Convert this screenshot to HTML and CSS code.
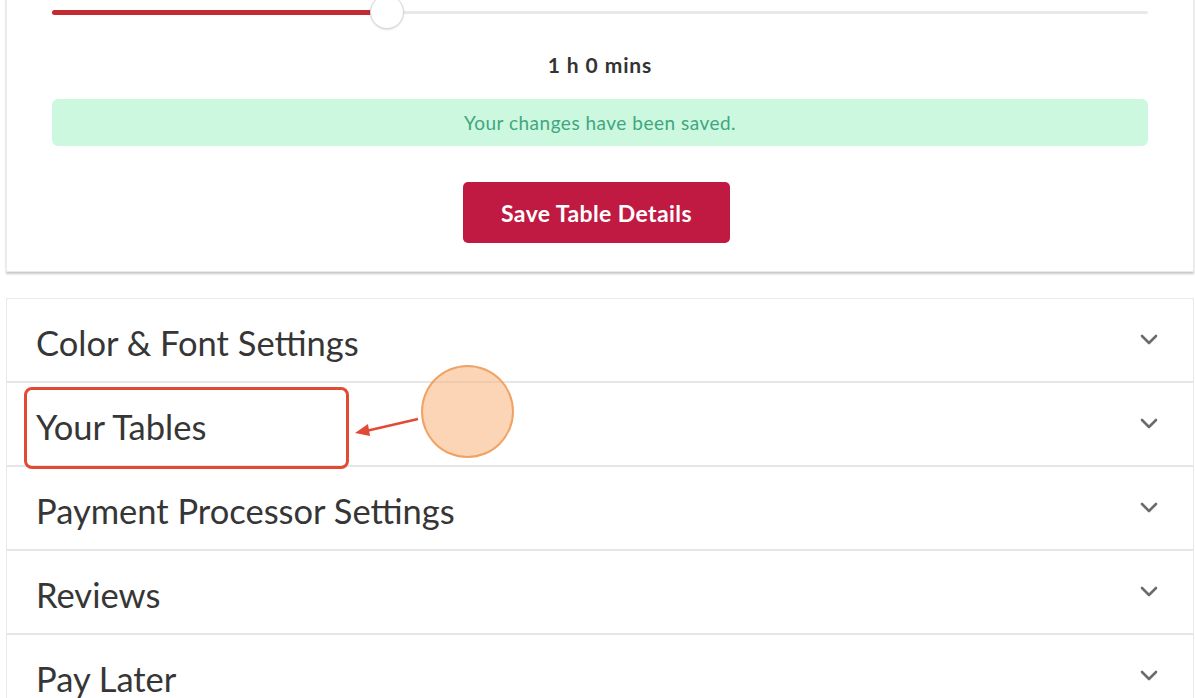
FILE: index.html
```html
<!DOCTYPE html>
<html>
<head>
<meta charset="utf-8">
<link rel="stylesheet" href="styles.css">
</head>
<body>
<div class="page">
  <section class="card details">
    <div class="slider">
      <div class="track"></div>
      <div class="fill" style="width: 335px"></div>
      <div class="thumb" style="left: 318px"></div>
    </div>
    <div class="duration">1 h 0 mins</div>
    <div class="alert">Your changes have been saved.</div>
    <div class="actions">
      <button class="btn-save">Save Table Details</button>
    </div>
  </section>

  <section class="card accordion">
    <div class="acc-row">
      <span class="acc-title">Color &amp; Font Settings</span>
      <svg class="chev" viewBox="0 0 18 12" width="18" height="12"><path d="M2 2 L9 9 L16 2" fill="none" stroke="#6b6b6b" stroke-width="2.6" stroke-linecap="round" stroke-linejoin="round"/></svg>
    </div>
    <div class="acc-row">
      <span class="acc-title">Your Tables</span>
      <svg class="chev" viewBox="0 0 18 12" width="18" height="12"><path d="M2 2 L9 9 L16 2" fill="none" stroke="#6b6b6b" stroke-width="2.6" stroke-linecap="round" stroke-linejoin="round"/></svg>
    </div>
    <div class="acc-row">
      <span class="acc-title">Payment Processor Settings</span>
      <svg class="chev" viewBox="0 0 18 12" width="18" height="12"><path d="M2 2 L9 9 L16 2" fill="none" stroke="#6b6b6b" stroke-width="2.6" stroke-linecap="round" stroke-linejoin="round"/></svg>
    </div>
    <div class="acc-row">
      <span class="acc-title">Reviews</span>
      <svg class="chev" viewBox="0 0 18 12" width="18" height="12"><path d="M2 2 L9 9 L16 2" fill="none" stroke="#6b6b6b" stroke-width="2.6" stroke-linecap="round" stroke-linejoin="round"/></svg>
    </div>
    <div class="acc-row">
      <span class="acc-title">Pay Later</span>
      <svg class="chev" viewBox="0 0 18 12" width="18" height="12"><path d="M2 2 L9 9 L16 2" fill="none" stroke="#6b6b6b" stroke-width="2.6" stroke-linecap="round" stroke-linejoin="round"/></svg>
    </div>
  </section>

  <div class="highlight"></div>
  <svg class="arrow" width="70" height="24" viewBox="0 0 70 24">
    <path d="M66 3 L14 15" stroke="#e24a35" stroke-width="2.5" fill="none"/>
    <path d="M3 17 L16 8 L18 20 Z" fill="#e24a35"/>
  </svg>
  <div class="tap"></div>
</div>
</body>
</html>
```

FILE: styles.css
```css
* { box-sizing: border-box; }
html, body {
  margin: 0;
  padding: 0;
  background: #ffffff;
  overflow: hidden;
}
body {
  font-family: Lato, "Open Sans", "Liberation Sans", sans-serif;
  color: #3a3a3a;
}
.page {
  position: relative;
  width: 1195px;
  height: 698px;
  overflow: hidden;
}
.card {
  margin-left: 6px;
  width: 1188px;
  background: #fff;
  border: 1px solid #e9e9e9;
}
.details {
  margin-top: -6px;
  padding: 0 45px 28px;
  border-top: none;
  box-shadow: 0 2px 2px rgba(0, 0, 0, 0.22);
}
.slider {
  position: relative;
  height: 35px;
}
.track {
  position: absolute;
  left: 0;
  right: 0;
  top: 17px;
  height: 3px;
  background: #e9e9e9;
  border-radius: 2px;
}
.fill {
  position: absolute;
  left: 0;
  top: 16px;
  height: 5px;
  background: #c42a31;
  border-radius: 3px;
}
.thumb {
  position: absolute;
  top: 1px;
  width: 34px;
  height: 34px;
  border-radius: 50%;
  background: #fff;
  border: 1px solid #d6d6d6;
  box-shadow: 0 1px 2px rgba(0,0,0,0.12);
}
.duration {
  margin-top: 23px;
  text-align: center;
  font-size: 21px;
  line-height: 26px;
  font-weight: 700;
  letter-spacing: 0.9px;
  color: #333;
}
.alert {
  margin-top: 21px;
  height: 47px;
  background: #cbf8de;
  border-radius: 6px;
  color: #41a680;
  font-size: 19px;
  letter-spacing: 0.5px;
  display: flex;
  align-items: center;
  justify-content: center;
}
.actions {
  margin-top: 36px;
  display: flex;
  justify-content: center;
}
.btn-save {
  width: 267px;
  height: 61px;
  border: none;
  border-radius: 5px;
  background: #c11a42;
  color: #fff;
  font-family: Lato, "Open Sans", "Liberation Sans", sans-serif;
  font-weight: 700;
  font-size: 23px;
  letter-spacing: 0.4px;
  margin-left: -7px;
}
.accordion {
  margin-top: 26px;
  border-bottom: none;
}
.acc-row {
  height: 84px;
  padding: 0 35px 0 29px;
  display: flex;
  align-items: center;
  justify-content: space-between;
  border-bottom: 2px solid #e6e6e6;
}
.acc-row:first-child { height: 84px; }
.acc-title {
  font-size: 34.5px;
  line-height: 40px;
  color: #363636;
  padding-top: 5px;
}
.chev { margin-top: 0; }
.highlight {
  position: absolute;
  left: 24px;
  top: 387px;
  width: 325px;
  height: 82px;
  border: 3px solid #e24a35;
  border-radius: 8px;
}
.arrow {
  position: absolute;
  left: 352px;
  top: 416px;
}
.tap {
  position: absolute;
  left: 421px;
  top: 365px;
  width: 93px;
  height: 93px;
  border-radius: 50%;
  background: rgba(248, 178, 120, 0.55);
  border: 2px solid rgba(238, 150, 80, 0.8);
}
```
